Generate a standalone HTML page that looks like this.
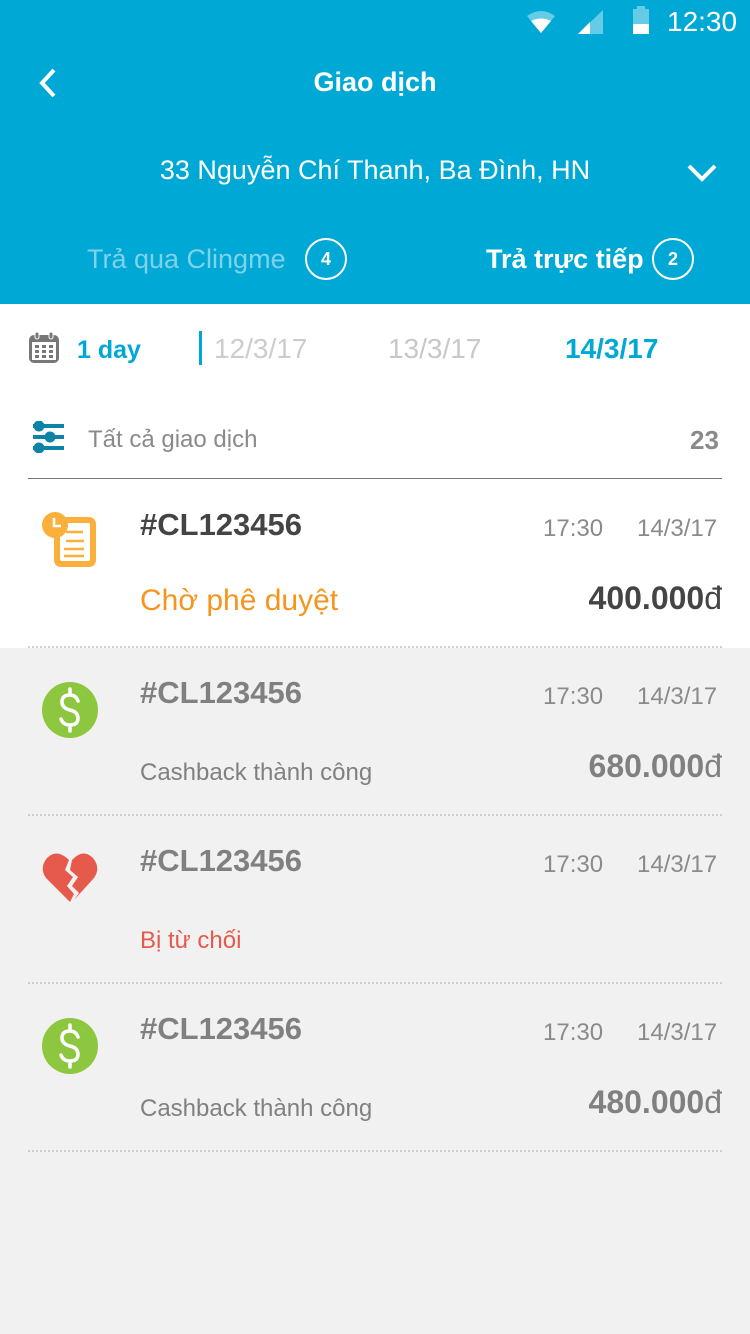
<!DOCTYPE html>
<html><head><meta charset="utf-8"><style>
*{margin:0;padding:0;box-sizing:border-box}
body{width:750px;height:1334px;background:#f1f1f1;font-family:"Liberation Sans",sans-serif;position:relative;overflow:hidden}
.a{position:absolute;white-space:nowrap}
.hdr{position:absolute;left:0;top:0;width:750px;height:304px;background:#00a9d5}
.w{color:#fff}
.circ{position:absolute;width:42px;height:42px;border:2px solid #fff;border-radius:50%;color:#fff;font-size:18px;font-weight:bold;text-align:center;line-height:38px}
.dot{position:absolute;left:28px;width:694px;border-top:2px dotted #cfcfcf}
.id{font-size:31px;font-weight:bold;color:#808080}
.tm{font-size:24px;color:#8a8a8a}
.amt{font-size:32px;font-weight:bold;color:#808080}
.amt span{font-weight:normal}
</style></head><body>
<div class="hdr"></div>
<svg class="a" style="left:526px;top:10px" width="30" height="24" viewBox="0 0 30 24"><path d="M1 6 Q15 -4 29 6 L15 23 Z" fill="#fff" opacity=".4"/><path d="M5 11 Q15 6 25 11 L15 23 Z" fill="#fff"/></svg>
<svg class="a" style="left:578px;top:10px" width="26" height="24"><path d="M25 0 L25 24 L0 24 Z" fill="#fff" opacity=".4"/><path d="M12 12 L12 24 L0 24 Z" fill="#fff"/></svg>
<svg class="a" style="left:632px;top:6px" width="18" height="28"><rect x="5" y="0" width="8" height="3" fill="#fff" opacity=".4"/><rect x="1" y="3" width="16" height="25" fill="#fff" opacity=".4"/><rect x="1" y="18" width="16" height="10" fill="#fff"/></svg>
<div class="a w" style="left:667px;top:6px;font-size:28px">12:30</div>
<svg class="a" style="left:36px;top:66px" width="24" height="34"><path d="M18 4 L6 17 L18 30" stroke="#fff" stroke-width="4" fill="none"/></svg>
<div class="a w" style="left:0;width:750px;text-align:center;top:67px;font-size:27px;font-weight:bold">Giao dịch</div>
<div class="a w" style="left:0;width:750px;text-align:center;top:155px;font-size:27px">33 Nguyễn Chí Thanh, Ba Đình, HN</div>
<svg class="a" style="left:686px;top:162px" width="32" height="22"><path d="M3 4 L16 17 L29 4" stroke="#fff" stroke-width="4" fill="none"/></svg>
<div class="a" style="left:87px;top:244px;font-size:27px;color:#7fd2ea">Trả qua Clingme</div>
<div class="circ" style="left:305px;top:238px">4</div>
<div class="a w" style="left:486px;top:244px;font-size:27px;font-weight:bold">Trả trực tiếp</div>
<div class="circ" style="left:652px;top:238px">2</div>
<div class="a" style="left:0;top:304px;width:750px;height:344px;background:#fff"></div>
<svg class="a" style="left:27px;top:331px" width="34" height="34"><rect x="2" y="4" width="30" height="28" rx="5" fill="#777"/><rect x="5" y="11" width="24" height="18" fill="#fff"/><rect x="8" y="1" width="4" height="7" rx="2" fill="#777" stroke="#fff"/><rect x="22" y="1" width="4" height="7" rx="2" fill="#777" stroke="#fff"/><g fill="#777"><rect x="8" y="14" width="4" height="3"/><rect x="15" y="14" width="4" height="3"/><rect x="22" y="14" width="4" height="3"/><rect x="8" y="19" width="4" height="3"/><rect x="15" y="19" width="4" height="3"/><rect x="22" y="19" width="4" height="3"/><rect x="8" y="24" width="4" height="3"/><rect x="15" y="24" width="4" height="3"/><rect x="22" y="24" width="4" height="3"/></g></svg>
<div class="a" style="left:77px;top:336px;font-size:25px;font-weight:bold;color:#00a9d5">1 day</div>
<div class="a" style="left:199px;top:331px;width:3px;height:34px;background:#00a9d5"></div>
<div class="a" style="left:214px;top:333px;font-size:28px;color:#ccc">12/3/17</div>
<div class="a" style="left:388px;top:333px;font-size:28px;color:#c8c8c8">13/3/17</div>
<div class="a" style="left:565px;top:333px;font-size:28px;font-weight:bold;color:#00a9d5">14/3/17</div>
<svg class="a" style="left:31px;top:421px" width="34" height="32" fill="#0e83a8" stroke="#0e83a8"><line x1="2" y1="5" x2="33" y2="5" stroke-width="4"/><line x1="2" y1="16" x2="33" y2="16" stroke-width="4"/><line x1="2" y1="27" x2="33" y2="27" stroke-width="4"/><circle cx="8" cy="5" r="5"/><circle cx="19" cy="16" r="5"/><circle cx="8" cy="27" r="5"/></svg>
<div class="a" style="left:88px;top:426px;font-size:24px;color:#8a8a8a">Tất cả giao dịch</div>
<div class="a" style="left:690px;top:425px;font-size:26px;font-weight:bold;color:#8a8a8a">23</div>
<div class="a" style="left:28px;top:478px;width:694px;height:1px;background:#777"></div>

<svg class="a" style="left:40px;top:512px" width="60" height="60"><rect x="14" y="5" width="42" height="50" rx="7" fill="#fbb03b"/><rect x="20" y="11" width="30" height="38" rx="2" fill="#fff"/><g stroke="#fbb03b" stroke-width="2.5"><line x1="26" y1="20" x2="43" y2="20"/><line x1="26" y1="29" x2="44" y2="29"/><line x1="24" y1="37" x2="44" y2="37"/><line x1="24" y1="44" x2="44" y2="44"/></g><circle cx="15" cy="13" r="13" fill="#fbb03b"/><path d="M14 6 V14 H21" stroke="#fff" stroke-width="2.5" fill="none"/></svg>
<div class="a id" style="left:140px;top:507px;color:#444">#CL123456</div>
<div class="a tm" style="left:543px;top:515px">17:30</div>
<div class="a tm" style="left:637px;top:515px">14/3/17</div>
<div class="a" style="left:140px;top:584px;font-size:30px;color:#f7941d">Chờ phê duyệt</div>
<div class="a amt" style="right:28px;top:580px;color:#444">400.000<span>đ</span></div>
<div class="dot" style="top:646px"></div>

<svg class="a" style="left:41px;top:681px" width="58" height="58"><circle cx="29" cy="29" r="28" fill="#8dc63f"/><path d="M37 20 Q35 14 29 14 Q21 14 21 21 Q21 27 29 29 Q37 31 37 37 Q37 44 29 44 Q22 44 20 38 M29 8 V14 M29 44 V50" stroke="#fff" stroke-width="3.5" fill="none" stroke-linecap="round"/></svg>
<div class="a id" style="left:140px;top:675px">#CL123456</div>
<div class="a tm" style="left:543px;top:683px">17:30</div>
<div class="a tm" style="left:637px;top:683px">14/3/17</div>
<div class="a" style="left:140px;top:759px;font-size:24px;color:#808080">Cashback thành công</div>
<div class="a amt" style="right:28px;top:748px">680.000<span>đ</span></div>
<div class="dot" style="top:814px"></div>

<svg class="a" style="left:41px;top:850px" width="58" height="54"><path d="M29 52 L5 28 Q-2 18 6 8 Q16 -2 28 10 L24 20 L32 27 L26 36 L33 44 L29 52 Z" fill="#e55a4a"/><path d="M31 10 Q42 -2 52 8 Q60 18 53 28 L33 50 L38 43 L31 36 L37 27 L29 20 Z" fill="#e55a4a"/></svg>
<div class="a id" style="left:140px;top:843px">#CL123456</div>
<div class="a tm" style="left:543px;top:851px">17:30</div>
<div class="a tm" style="left:637px;top:851px">14/3/17</div>
<div class="a" style="left:140px;top:927px;font-size:24px;color:#e55a4a">Bị từ chối</div>
<div class="dot" style="top:982px"></div>

<svg class="a" style="left:41px;top:1017px" width="58" height="58"><circle cx="29" cy="29" r="28" fill="#8dc63f"/><path d="M37 20 Q35 14 29 14 Q21 14 21 21 Q21 27 29 29 Q37 31 37 37 Q37 44 29 44 Q22 44 20 38 M29 8 V14 M29 44 V50" stroke="#fff" stroke-width="3.5" fill="none" stroke-linecap="round"/></svg>
<div class="a id" style="left:140px;top:1011px">#CL123456</div>
<div class="a tm" style="left:543px;top:1019px">17:30</div>
<div class="a tm" style="left:637px;top:1019px">14/3/17</div>
<div class="a" style="left:140px;top:1095px;font-size:24px;color:#808080">Cashback thành công</div>
<div class="a amt" style="right:28px;top:1084px">480.000<span>đ</span></div>
<div class="dot" style="top:1150px"></div>
</body></html>
